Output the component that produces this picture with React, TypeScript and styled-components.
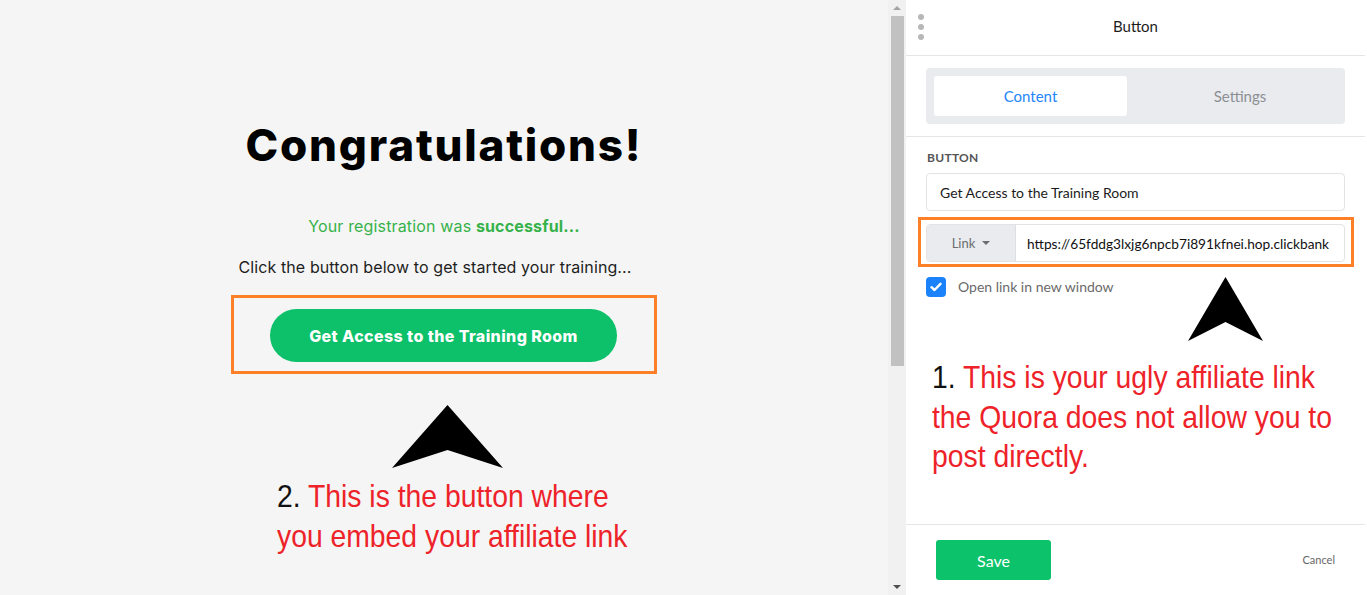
import React from "react";
import styled, { createGlobalStyle } from "styled-components";

const GlobalStyle = createGlobalStyle`
  html, body { margin: 0; padding: 0; background: #ffffff; overflow: hidden; }
  * { box-sizing: border-box; }
`;

const Page = styled.div`
  display: flex;
  width: 1367px;
  height: 595px;
  background: #ffffff;
`;

const Canvas = styled.div`
  width: 888px;
  height: 595px;
  flex: none;
  background: #f5f5f5;
  display: flex;
  flex-direction: column;
  align-items: center;
  padding-top: 118px;
  font-family: Inter, "Open Sans", sans-serif;
`;

const Title = styled.h1`
  margin: 0;
  font-size: 44px;
  line-height: 54px;
  font-weight: 800;
  color: #000;
  letter-spacing: 1.8px;
`;

const Success = styled.p`
  margin: 42px 0 0;
  font-size: 16px;
  line-height: 24px;
  color: #36b24a;
  letter-spacing: 0.15px;
  b { font-weight: 700; }
`;

const Lead = styled.p`
  margin: 17px 0 0 -18px;
  font-size: 16px;
  line-height: 24px;
  color: #1e1e1e;
  letter-spacing: 0.1px;
`;

const Highlight = styled.div<{ $inset: string }>`
  border: 3px solid #fd7f28;
  padding: ${(p) => p.$inset};
`;

const CtaBox = styled(Highlight)`
  margin-top: 16px;
  width: 426px;
  display: flex;
`;

const CtaButton = styled.button`
  width: 347px;
  height: 53px;
  border: none;
  border-radius: 27px;
  background: #0cc169;
  color: #fff;
  font-family: Inter, sans-serif;
  font-weight: 800;
  font-size: 16px;
  letter-spacing: 0.4px;
`;

const Arrow = styled.svg<{ $ml: number; $mt: number; $mr?: number }>`
  display: block;
  flex: none;
  margin-left: ${(p) => p.$ml}px;
  margin-top: ${(p) => p.$mt}px;
  margin-right: ${(p) => p.$mr ?? 0}px;
`;

const Note = styled.p<{ $ml: number; $mt: number }>`
  margin: ${(p) => p.$mt}px 0 0 ${(p) => p.$ml}px;
  align-self: flex-start;
  font-family: "Liberation Sans", Arial, sans-serif;
  font-size: 32px;
  line-height: 39.5px;
  color: #ee2229;
  white-space: nowrap;
  transform: scaleX(0.885);
  transform-origin: left top;
  span { color: #111; }
`;

const Scrollbar = styled.div`
  width: 18px;
  height: 595px;
  flex: none;
  background: #f1f1f1;
  display: flex;
  flex-direction: column;
  align-items: center;
`;

const ScrollArrow = styled.div<{ $down?: boolean }>`
  height: 16px;
  width: 100%;
  flex: none;
  display: flex;
  align-items: center;
  justify-content: center;
  &::before {
    content: "";
    border-left: 4px solid transparent;
    border-right: 4px solid transparent;
    ${(p) => (p.$down ? "border-top: 4px solid #505050;" : "border-bottom: 4px solid #a3a3a3;")}
  }
`;

const Thumb = styled.div`
  width: 13px;
  height: 350px;
  flex: none;
  background: #c1c1c1;
`;

const Panel = styled.div`
  width: 459px;
  height: 595px;
  flex: none;
  display: flex;
  flex-direction: column;
  font-family: Lato, "Open Sans", sans-serif;
  color: #222;
`;

const Header = styled.div`
  height: 56px;
  flex: none;
  border-bottom: 1px solid #e6e6e6;
  display: grid;
  grid-template-columns: 40px 1fr 40px;
  align-items: center;
`;

const Dots = styled.div`
  display: flex;
  flex-direction: column;
  gap: 4px;
  padding-left: 12px;
  margin-top: -1px;
  i {
    width: 6px;
    height: 6px;
    border-radius: 50%;
    background: #b7b7b7;
  }
`;

const HeaderTitle = styled.div`
  text-align: center;
  font-size: 15px;
  color: #1d1d1d;
  margin-top: -3px;
`;

const TabsSection = styled.div`
  flex: none;
  padding: 12px 20px;
  border-bottom: 1px solid #e6e6e6;
`;

const Tabs = styled.div`
  background: #e9ebef;
  border-radius: 4px;
  padding: 8px;
  display: grid;
  grid-template-columns: 193px 1fr;
  gap: 16px;
`;

const Tab = styled.div<{ $active?: boolean }>`
  height: 40px;
  border-radius: 3px;
  display: flex;
  align-items: center;
  justify-content: center;
  font-size: 15px;
  background: ${(p) => (p.$active ? "#ffffff" : "transparent")};
  color: ${(p) => (p.$active ? "#2385f8" : "#8d8f93")};
`;

const Body = styled.div`
  flex: 1;
  min-height: 0;
  padding: 14px 20px 0;
  display: flex;
  flex-direction: column;
`;

const Label = styled.div`
  font-size: 12px;
  line-height: 14px;
  font-weight: 700;
  color: #555;
  letter-spacing: 0.3px;
  padding-left: 1px;
`;

const TextField = styled.div`
  margin-top: 8px;
  height: 38px;
  border: 1px solid #e3e3e3;
  border-radius: 4px;
  display: flex;
  align-items: center;
  padding-left: 13px;
  font-size: 14px;
  color: #1b1b1b;
`;

const LinkBox = styled(Highlight)`
  margin: 6px -9px 0 -8px;
`;

const LinkGroup = styled.div`
  height: 38px;
  border: 1px solid #e3e3e3;
  border-radius: 4px;
  display: flex;
  overflow: hidden;
`;

const Addon = styled.div`
  width: 89px;
  flex: none;
  background: #e9ebef;
  border-right: 1px solid #dedfe3;
  display: flex;
  align-items: center;
  justify-content: center;
  gap: 7px;
  font-size: 13px;
  color: #6b6d70;
  &::after {
    content: "";
    border-left: 4px solid transparent;
    border-right: 4px solid transparent;
    border-top: 4px solid #6b6d70;
  }
`;

const Url = styled.div`
  flex: 1;
  display: flex;
  align-items: center;
  padding-left: 11px;
  font-size: 13.7px;
  color: #111;
  white-space: nowrap;
  overflow: hidden;
`;

const OptionRow = styled.div`
  margin-top: 10px;
  display: flex;
  align-items: flex-start;
`;

const Check = styled.span`
  width: 20px;
  height: 20px;
  border-radius: 4px;
  background: #1a82fb;
  display: flex;
  align-items: center;
  justify-content: center;
  flex: none;
`;

const OptionLabel = styled.span`
  margin-left: 12px;
  font-size: 14px;
  line-height: 20px;
  color: #6a6a6a;
`;

const Spacer = styled.div`
  flex: 1;
`;

const Footer = styled.div`
  height: 71px;
  flex: none;
  border-top: 1px solid #e6e6e6;
  display: flex;
  align-items: flex-start;
  justify-content: space-between;
  padding: 15px 30px 0;
`;

const SaveButton = styled.button`
  width: 115px;
  height: 40px;
  border: none;
  border-radius: 3px;
  background: #0cc26a;
  color: #fff;
  font-family: Lato, sans-serif;
  font-size: 16px;
`;

const Cancel = styled.span`
  font-size: 11px;
  color: #666;
  margin-top: 13px;
`;

const ArrowShape = ({ w, h, notch }: { w: number; h: number; notch: number }) => (
  <polygon points={`${w / 2},0 ${w},${h} ${w / 2},${notch} 0,${h}`} fill="#000" />
);

export default function App() {
  return (
    <>
      <GlobalStyle />
      <Page>
        <Canvas>
          <Title>Congratulations!</Title>
          <Success>
            Your registration was <b>successful...</b>
          </Success>
          <Lead>Click the button below to get started your training...</Lead>
          <CtaBox $inset="11px 37px 9px 36px">
            <CtaButton>Get Access to the Training Room</CtaButton>
          </CtaBox>
          <Arrow $ml={7} $mt={31} width="111" height="63" viewBox="0 0 111 63">
            <ArrowShape w={111} h={63} notch={45} />
          </Arrow>
          <Note $ml={277} $mt={9}>
            <span>2.</span> This is the button where
            <br />
            you embed your affiliate link
          </Note>
        </Canvas>
        <Scrollbar>
          <ScrollArrow />
          <Thumb />
          <Spacer />
          <ScrollArrow $down />
        </Scrollbar>
        <Panel>
          <Header>
            <Dots>
              <i />
              <i />
              <i />
            </Dots>
            <HeaderTitle>Button</HeaderTitle>
            <div />
          </Header>
          <TabsSection>
            <Tabs>
              <Tab $active>Content</Tab>
              <Tab>Settings</Tab>
            </Tabs>
          </TabsSection>
          <Body>
            <Label>BUTTON</Label>
            <TextField>Get Access to the Training Room</TextField>
            <LinkBox $inset="4px 6px 2px 5px">
              <LinkGroup>
                <Addon>Link</Addon>
                <Url>https://65fddg3lxjg6npcb7i891kfnei.hop.clickbank</Url>
              </LinkGroup>
            </LinkBox>
            <OptionRow>
              <Check>
                <svg width="12" height="10" viewBox="0 0 12 10">
                  <path d="M1.5 5.2 L4.5 8 L10.5 1.8" stroke="#fff" strokeWidth="2.4" fill="none" strokeLinecap="round" strokeLinejoin="round" />
                </svg>
              </Check>
              <OptionLabel>Open link in new window</OptionLabel>
              <Spacer />
              <Arrow $ml={0} $mt={0} $mr={82} width="75" height="64" viewBox="0 0 75 64">
                <ArrowShape w={75} h={64} notch={45} />
              </Arrow>
            </OptionRow>
            <Note $ml={6} $mt={17}>
              <span>1.</span> This is your ugly affiliate link
              <br />
              the Quora does not allow you to
              <br />
              post directly.
            </Note>
          </Body>
          <Footer>
            <SaveButton>Save</SaveButton>
            <Cancel>Cancel</Cancel>
          </Footer>
        </Panel>
      </Page>
    </>
  );
}
